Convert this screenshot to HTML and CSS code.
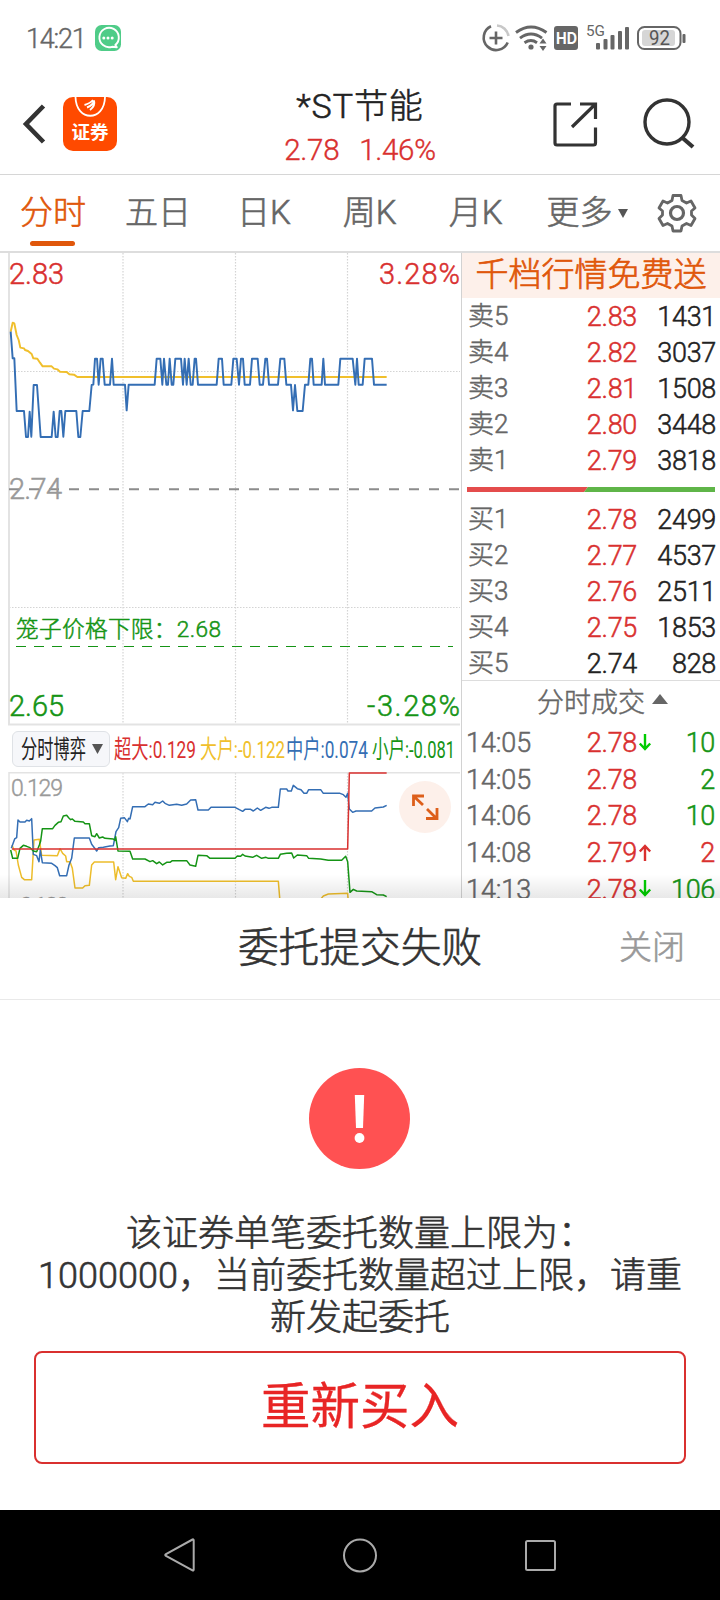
FILE: index.html
```html
<!DOCTYPE html>
<html lang="zh-CN">
<head>
<meta charset="utf-8">
<title>*ST节能</title>
<link rel="stylesheet" href="styles.css">
</head>
<body>
<div class="status">
  <span class="clock">14:21</span>
  <svg class="msg" width="26" height="26" viewBox="0 0 26 26"><rect width="26" height="26" rx="6.5" fill="#4fcc88"/><path d="M20.3 20A9.700 9.700 0 1 0 17 21.800L21.800 22.200Z" fill="none" stroke="#fff" stroke-width="1.900" stroke-linejoin="round"/><g fill="#fff"><circle cx="8.800" cy="13" r="1.500"/><circle cx="13" cy="13" r="1.500"/><circle cx="17.200" cy="13" r="1.500"/></g></svg>
  <svg class="sysicons" width="210" height="32" viewBox="480 21 210 32">
    <g fill="none" stroke="#666" stroke-width="2.600">
      <path d="M491 25.200A12.500 12.500 0 1 0 507.700 41.500"/>
      <path d="M497 24.500A12.500 12.500 0 0 1 508.500 35" stroke="#c8c8c8"/>
      <path d="M489.500 37H502.500M496 30.500V43.500"/>
      <path d="M516 31.500Q531 20.500 546.500 31.500M520 37.200Q531 29 542 37.200M524.500 41.700Q531 37.500 537 41.700" stroke-width="2.900"/>
    </g>
    <circle cx="531" cy="46" r="2.600" fill="#666"/>
    <path d="M539.500 42.500L543 37.500L546.500 42.500ZM539.500 45L543 50L546.500 45Z" fill="#666"/>
    <rect x="554" y="25" width="24" height="24" rx="3" fill="#666"/>
    <text x="556" y="42.500" class="hd" textLength="21" lengthAdjust="spacingAndGlyphs">HD</text>
    <text x="586" y="35" class="g5" textLength="19" lengthAdjust="spacingAndGlyphs">5G</text>
    <g fill="#666"><rect x="596" y="42" width="4" height="6.500" rx="1"/><rect x="603.500" y="38" width="4" height="10.500" rx="1"/><rect x="610.500" y="34" width="4" height="14.500" rx="1"/><rect x="618" y="30" width="4" height="18.500" rx="1"/><rect x="625" y="26" width="4" height="22.500" rx="1"/><rect x="682.500" y="33" width="3" height="9" rx="1"/></g>
    <rect x="638" y="26" width="42.500" height="22" rx="6.500" fill="none" stroke="#666" stroke-width="2"/>
    <rect x="642" y="29" width="33" height="16" rx="3" fill="#d6d6d6"/>
    <text x="649" y="44" class="batt" textLength="21" lengthAdjust="spacingAndGlyphs">92</text>
  </svg>
</div>
<header class="header">
  <svg class="back" width="24" height="42" viewBox="0 0 24 42"><path d="M20.500 3L3 21L20.500 39" fill="none" stroke="#333" stroke-width="4.600"/></svg>
  <div class="app">
    <svg width="54" height="22" viewBox="0 0 54 22" fill="none" stroke="#fff"><path d="M12.500 0C13 25 41.500 25 42 0" stroke-width="1.800"/><path d="M21.500 8C25 7 28 5.500 30 3M24 10.500C28 9 30.500 7 31 3.500M27 13C31 10 32 7 31 3.500" stroke-width="1.900"/></svg>
    <span>证券</span>
  </div>
  <div class="heading">
    <h1>*ST节能</h1>
    <p><span>2.78</span><span>1.46%</span></p>
  </div>
  <svg class="actions" width="144" height="52" viewBox="551 95.500 144 52" fill="none" stroke="#333" stroke-width="3.200"><path d="M571 101.500H557Q555 101.500 555 103.500V140.500Q555 142.500 557 142.500H593.500Q595.500 142.500 595.500 140.500V125M580 101.500H595.500V116.500M595 102L572 124.500"/><circle cx="667" cy="119.500" r="22" stroke-width="3.400"/><path d="M682 135L693 144.500" stroke-width="4.200"/></svg>
</header>
<nav class="tabs">
  <span class="tab on">分时</span><span class="tab">五日</span><span class="tab">日K</span><span class="tab">周K</span><span class="tab">月K</span><span class="tab more">更多<i></i></span>
  <svg class="gear" width="40" height="40" viewBox="0 0 40 40" fill="none" stroke="#666" stroke-width="2.800" stroke-linejoin="round"><path d="M16 2.500H24L25 7.500L29.500 10L34 8L38 15L34.500 18V22L38 25.500L34 32.500L29.500 30.500L25 33L24 38H16L15 33L10.500 30.500L6 32.500L2 25.500L5.500 22V18L2 15L6 8L10.500 10L15 7.500Z"/><circle cx="20" cy="20" r="6.500" stroke-width="3.200"/></svg>
</nav>
<main class="quote">
  <section class="charts">
    <svg class="price" width="461" height="473" viewBox="0 253 461 473">
      <g class="grid"><path d="M123 253V724M235.500 253V724M347.500 253V724M9 371.500H460M9 607.500H460"/></g>
      <path d="M9 253V724.500H460" class="frame"/>
      <path d="M9 489.200H460" stroke="#8c8c8c" stroke-width="2" stroke-dasharray="10 10"/>
      <path d="M16 646.500H453" stroke="#159415" stroke-width="1.200" stroke-dasharray="10 8"/>
      <g transform="translate(0 250) scale(.33333)" fill="none" stroke-width="5.800" stroke-linejoin="round">
        <polyline stroke="#f0bf2c" points="32,245 38,218 43,220 50,255 56,270 61,293 72,295 75,300 84,303 95,312 100,325 112,326 120,338 128,349 155,349 162,356 172,358 180,365 200,366 208,373 222,374 232,381 1160,381"/>
        <polyline stroke="#346eb4" points="32,245 38,325 43,325 50,483 72,483 78,561 84,561 89,485 94,560 101,405 111,405 122,561 155,561 161,485 167,561 173,561 179,483 184,483 190,560 196,483 229,483 235,561 241,561 248,483 268,483 275,405 280,404 285,326 291,326 296,404 302,326 308,326 314,404 330,404 336,326 341,404 375,404 380,481 386,404 464,404 470,326 481,326 487,404 492,326 499,404 504,404 509,326 515,404 520,404 526,326 543,326 549,404 554,326 560,404 566,326 572,404 578,404 584,326 588,326 594,404 650,404 656,326 666,326 671,404 694,404 700,326 710,326 717,404 723,326 729,326 734,404 750,404 756,326 773,326 779,404 789,404 796,326 801,326 807,404 834,404 841,326 853,326 859,404 873,404 879,481 885,405 892,483 908,483 915,404 925,404 931,326 936,326 941,404 965,404 970,326 975,404 1015,404 1021,326 1058,326 1066,404 1071,326 1076,404 1088,404 1094,326 1116,326 1122,404 1160,404"/>
      </g>
      <g class="axis">
        <text x="9" y="283.500" color="#d9302f" textLength="55">2.83</text>
        <text x="379" y="283.500" color="#d9302f" textLength="81">3.28%</text>
        <text x="9" y="499" color="#999" textLength="53">2.74</text>
        <text x="9" y="715.500" color="#159415" textLength="55">2.65</text>
        <text x="367" y="715.500" color="#159415" textLength="93">-3.28%</text>
        <text x="16" y="636.500" color="#159415" class="cage" textLength="205">笼子价格下限：2.68</text>
      </g>
    </svg>
    <div class="legend">
      <div class="pick"><svg width="96" height="34" viewBox="13 732 96 34"><text x="21" y="757.500" fill="#222" textLength="65" lengthAdjust="spacingAndGlyphs">分时博弈</text><path d="M92 744H103L97.500 754Z" fill="#555"/></svg></div>
      <svg width="345" height="36" viewBox="113 731 345 36">
        <text x="114" y="757.500" fill="#d9302f" textLength="82" lengthAdjust="spacingAndGlyphs">超大:0.129</text>
        <text x="200" y="757.500" fill="#f0bf2c" textLength="85" lengthAdjust="spacingAndGlyphs">大户:-0.122</text>
        <text x="286" y="757.500" fill="#346eb4" textLength="82" lengthAdjust="spacingAndGlyphs">中户:0.074</text>
        <text x="372" y="757.500" fill="#159415" textLength="83" lengthAdjust="spacingAndGlyphs">小户:-0.081</text>
      </svg>
    </div>
    <svg class="game" width="461" height="126" viewBox="0 772 461 126">
      <path class="grid" d="M123 773V898M235.500 773V898M347.500 773V898"/>
      <path d="M9 898V772.700H460" class="frame thin"/>
      <g transform="translate(0 715) scale(.33333)" fill="none" stroke-width="4.500" stroke-linejoin="round">
        <polyline stroke="#edbd2b" points="36,390 42,405 48,408 55,450 65,487 73,494 95,494 102,375 118,373 125,421 172,422 180,401 188,415 197,423 200,440 210,440 217,460 225,519 248,519 255,512 268,511 275,450 283,441 341,441 347,494 354,455 365,488 377,490 383,476 388,484 395,487 400,499 835,499 840,560"/>
        <polyline stroke="#edbd2b" points="960,555 970,543 985,537 1043,535 1045,560"/>
        <polyline stroke="#346eb4" points="34,400 44,372 50,368 54,315 60,321 75,321 80,316 88,318 95,311 100,418 110,422 117,440 121,405 127,443 155,445 165,452 172,458 179,482 200,482 207,450 215,430 223,369 268,369 275,388 283,398 290,408 296,398 310,397 330,393 340,392 348,350 356,338 362,310 373,308 382,320 386,310 390,312 398,275 435,275 445,267 458,269 465,262 478,265 488,258 495,265 508,271 530,268 545,271 560,267 572,255 587,254 594,285 625,285 633,277 705,277 718,284 728,289 735,283 752,283 760,288 772,279 782,286 797,277 807,280 815,277 835,277 841,222 860,222 864,228 874,228 880,211 892,221 903,224 912,235 920,235 926,224 962,224 970,235 1020,235 1030,239 1038,247 1043,235 1048,282 1058,292 1068,288 1115,288 1125,279 1150,276 1160,271"/>
        <polyline stroke="#159415" points="32,405 38,430 53,430 60,400 70,391 80,394 90,398 100,408 110,410 118,390 122,378 127,341 158,341 165,331 175,322 183,320 190,303 200,301 206,308 212,314 217,312 225,319 250,321 255,326 268,326 275,362 285,365 290,356 298,369 308,366 315,370 340,372 345,376 347,365 354,408 390,409 398,432 435,432 450,440 458,437 470,446 478,441 488,450 500,442 510,442 517,437 560,437 570,450 587,454 594,421 620,422 630,430 705,430 712,423 722,424 728,418 735,423 758,427 770,421 785,430 798,427 805,430 835,430 841,418 860,415 875,414 881,429 892,420 920,422 926,430 962,432 985,436 1025,436 1037,424 1043,440 1050,532 1060,523 1070,528 1115,530 1130,539 1150,540 1160,545"/>
        <polyline stroke="#d9302f" points="36,402 1043,402 1048,174 1160,174"/>
      </g>
      <text x="11" y="796" class="small" textLength="52">0.129</text>
      <text x="15" y="914" class="small" textLength="54">-0.129</text>
      <circle cx="425" cy="807" r="26" fill="#fdf0ea"/>
      <path d="M413.500 806V796H424M414 796.500L423 805M427 809L436 818M437 808V818.500H426" fill="none" stroke="#dd5f1b" stroke-width="2.800"/>
    </svg>
  </section>
  <section class="book">
    <div class="banner">千档行情免费送</div>
    <div class="levels">
      <div class="row"><b>卖5</b><span class="r">2.83</span><span>1431</span></div>
      <div class="row"><b>卖4</b><span class="r">2.82</span><span>3037</span></div>
      <div class="row"><b>卖3</b><span class="r">2.81</span><span>1508</span></div>
      <div class="row"><b>卖2</b><span class="r">2.80</span><span>3448</span></div>
      <div class="row"><b>卖1</b><span class="r">2.79</span><span>3818</span></div>
    </div>
    <svg class="ratio" width="248" height="5"><path d="M0 0H121L117 5H0Z" fill="#e44c4c"/><path d="M121 0H248V5H117Z" fill="#5fb548"/></svg>
    <div class="levels buy">
      <div class="row"><b>买1</b><span class="r">2.78</span><span>2499</span></div>
      <div class="row"><b>买2</b><span class="r">2.77</span><span>4537</span></div>
      <div class="row"><b>买3</b><span class="r">2.76</span><span>2511</span></div>
      <div class="row"><b>买4</b><span class="r">2.75</span><span>1853</span></div>
      <div class="row"><b>买5</b><span>2.74</span><span>828</span></div>
    </div>
    <div class="deals-title">分时成交<i></i></div>
    <div class="deals">
      <div class="deal"><time>14:05</time><span class="r">2.78</span><svg class="arrow" width="12" height="18"><path d="M6 0V15M.8 9.500L6 15L11.200 9.500" stroke="#0c0"/></svg><span class="g">10</span></div>
      <div class="deal"><time>14:05</time><span class="r">2.78</span><i></i><span class="g">2</span></div>
      <div class="deal"><time>14:06</time><span class="r">2.78</span><i></i><span class="g">10</span></div>
      <div class="deal"><time>14:08</time><span class="r">2.79</span><svg class="arrow" width="12" height="18"><path d="M6 17V2M.8 7.500L6 2L11.200 7.500" stroke="#d9302f"/></svg><span class="r">2</span></div>
      <div class="deal"><time>14:13</time><span class="r">2.78</span><svg class="arrow" width="12" height="18"><path d="M6 0V15M.8 9.500L6 15L11.200 9.500" stroke="#0c0"/></svg><span class="g">106</span></div>
    </div>
  </section>
  <div class="shade"></div>
</main>
<section class="sheet">
  <div class="sheet-head"><h2>委托提交失败</h2><span class="close">关闭</span></div>
  <svg class="alert" width="102" height="102" viewBox="-50.500 -51.500 102 102"><circle r="50.500" fill="#ff5152"/><path d="M-4.700 -23.500H4.700L3.500 9.500H-3.500Z" fill="#fff"/><circle cy="19.500" r="4.900" fill="#fff"/></svg>
  <p class="reason">该证券单笔委托数量上限为：<br>1000000，当前委托数量超过上限，请重<br>新发起委托</p>
  <div class="retry">重新买入</div>
</section>
<footer class="keys">
  <svg width="36" height="36" viewBox="0 0 36 36"><path d="M30.500 2.500Q31.700 2 31.700 3.500V32.500Q31.700 34 30.500 33.300L4 19Q2.500 18 4 17Z"/></svg>
  <svg width="36" height="36" viewBox="0 0 36 36"><circle cx="18" cy="18.500" r="16"/></svg>
  <svg width="36" height="36" viewBox="0 0 36 36"><rect x="4" y="4" width="29" height="29" rx="1.500"/></svg>
</footer>
</body>
</html>
```
FILE: styles.css
```css
* { box-sizing: border-box; }
body {
  margin: 0; width: 720px; height: 1600px; overflow: hidden;
  display: flex; flex-direction: column; background: #fff; color: #222;
  font-family: "Roboto", "Noto Sans CJK SC", sans-serif; font-weight: 300;
  -webkit-text-stroke: .6px currentColor;
}
svg { display: block; flex: none; overflow: visible; }
svg text { -webkit-text-stroke: 0; }
h1, h2, p { margin: 0; font-weight: inherit; }

.status { height: 74px; display: flex; align-items: center; padding: 2px 30px 0 26px; }
.clock { width: 69px; font-size: 27px; letter-spacing: -1.200px; color: #666; line-height: 30px; padding-top: 1px; -webkit-text-stroke-width: .4px; }
.sysicons { margin-left: auto; }
.hd { font: 700 16px "Inter", sans-serif; fill: #fff; }
.g5 { font: 400 15px "Roboto", sans-serif; fill: #666; }
.batt { font: 400 20px "Roboto", sans-serif; fill: #555; }

.header { height: 101px; display: flex; align-items: center; padding: 0 25px 0 23px; border-bottom: 1px solid #d6d6d6; }
.back { margin-right: 16px; }
.app { width: 54px; height: 54px; border-radius: 10px; background: #ff4a00; overflow: hidden; color: #fff; text-align: center; }
.app span { display: block; font: 700 18.500px/20px "Noto Sans CJK SC", sans-serif; margin-top: 2px; -webkit-text-stroke: 0; }
.heading { flex: 1; padding-left: 99px; padding-top: 8px; display: flex; flex-direction: column; align-items: center; white-space: nowrap; }
.heading h1 { font-size: 34px; line-height: 44px; letter-spacing: .9px; }
.heading p { display: flex; gap: 20px; font-size: 29.500px; line-height: 44px; color: #d9302f; letter-spacing: -.3px; -webkit-text-stroke-width: .4px; }
.actions { margin-left: 47px; }

.tabs { height: 78px; display: flex; align-items: center; padding: 0 23px 0 20px; border-bottom: 2px solid #ddd; font-size: 33px; color: #666; }
.tab { position: relative; height: 76px; line-height: 76px; margin-right: 39px; white-space: nowrap; }
.tab.on { color: #e0570b; }
.tab.on::after { content: ""; position: absolute; left: 10px; bottom: 5px; width: 45px; height: 5px; border-radius: 3px; background: #e0570b; }
.tab:nth-child(2) { margin-right: 46px; }
.tab:nth-child(3) { margin-right: 52px; }
.tab:nth-child(4) { margin-right: 52px; }
.tab:nth-child(5) { margin-right: 44px; }
.more { display: flex; align-items: center; margin: 0; line-height: 74px; }
.more i { margin-left: 5px; border: 5.500px solid transparent; border-top: 9px solid #555; border-bottom: 0; }
.gear { margin-left: auto; }

.quote { position: relative; height: 645px; display: grid; grid-template-columns: 462px 258px; overflow: hidden; }
.charts { border-right: 1px solid #d2d2d2; display: flex; flex-direction: column; }
.grid { fill: none; stroke: #d4d4d4; stroke-width: 1.200; stroke-dasharray: 1.500 1.500; }
.frame { fill: none; stroke: #e3e3e3; stroke-width: 2; }
.frame.thin { stroke-width: 1.500; }
.axis text { font-size: 29px; fill: currentColor; stroke: currentColor; stroke-width: .5px; }
.axis .cage { font-size: 22.600px; }
.legend { height: 46px; display: flex; align-items: center; gap: 3px; padding-left: 12px; }
.legend text { font-size: 24.500px; font-weight: 400; }
.pick { width: 98px; height: 36px; border: 1px solid #dfe2e6; border-radius: 6px; background: #f6f7fa; }
.small { font-size: 23px; fill: #999; stroke: #999; stroke-width: .4px; }

.book { font-size: 27px; -webkit-text-stroke-width: .5px; }
.banner { height: 45px; background: #fdf0ea; color: #e0570b; text-align: center; font-size: 33px; line-height: 44px; -webkit-text-stroke-width: .7px; }
.levels { height: 189px; }
.row { height: 36px; display: grid; grid-template-columns: 81px 88px 79px; line-height: 38px; padding-left: 6px; }
.row b { font-weight: inherit; font-size: 26px; color: #666; line-height: 36px; }
.row span { text-align: right; letter-spacing: -.3px; }
.r { color: #d9302f; }
.g { color: #159415; }
.ratio { margin-left: 5px; }
.buy { height: 189px; padding-top: 9px; border-bottom: 1px solid #ddd; }
.deals-title { height: 43px; display: flex; align-items: center; justify-content: center; padding: 0 6px 0 29px; font-size: 27px; line-height: 38px; color: #666; gap: 7px; }
.deals-title i { border: 8px solid transparent; border-bottom: 10px solid #666; border-top: 0; margin-top: -8px; }
.deal { height: 36.700px; display: grid; grid-template-columns: 104px 67px 16px 62px; line-height: 38px; padding-left: 4px; align-items: center; }
.deal time { color: #666; letter-spacing: -.1px; }
.deal span { text-align: right; letter-spacing: -.3px; }
.arrow { margin-left: 2px; margin-top: -1px; }
.arrow path { fill: none; stroke-width: 2.400; }
.shade { position: absolute; inset: auto 0 0 0; height: 24px; background: linear-gradient(rgba(0,0,0,0), rgba(0,0,0,.09)); }

.sheet { height: 612px; background: #fff; color: #333; display: flex; flex-direction: column; align-items: center; }
.sheet-head { width: 720px; height: 102px; padding: 0 35px; border-bottom: 1px solid #e9e9e9; display: grid; grid-template-columns: 1fr auto 1fr; align-items: center; }
.sheet-head h2 { grid-column: 2; font-size: 40.700px; line-height: 60px; margin-top: -1px; }
.close { justify-self: end; font-size: 33px; color: #999; line-height: 60px; margin-top: -1px; }
.alert { margin-top: 67px; }
.reason { margin-top: 44px; text-align: center; font-size: 36px; line-height: 42px; white-space: nowrap; }
.retry { margin-top: 12px; width: 652px; height: 113px; border: 2px solid #d9302f; border-radius: 8px; color: #e82525; font-size: 49.500px; line-height: 108px; text-align: center; font-weight: 400; -webkit-text-stroke-width: .3px; }

.keys { height: 90px; background: #000; display: grid; grid-template-columns: repeat(3, 180px); justify-content: center; justify-items: center; align-items: center; }
.keys svg { fill: none; stroke: #aaa; stroke-width: 2; }
```
